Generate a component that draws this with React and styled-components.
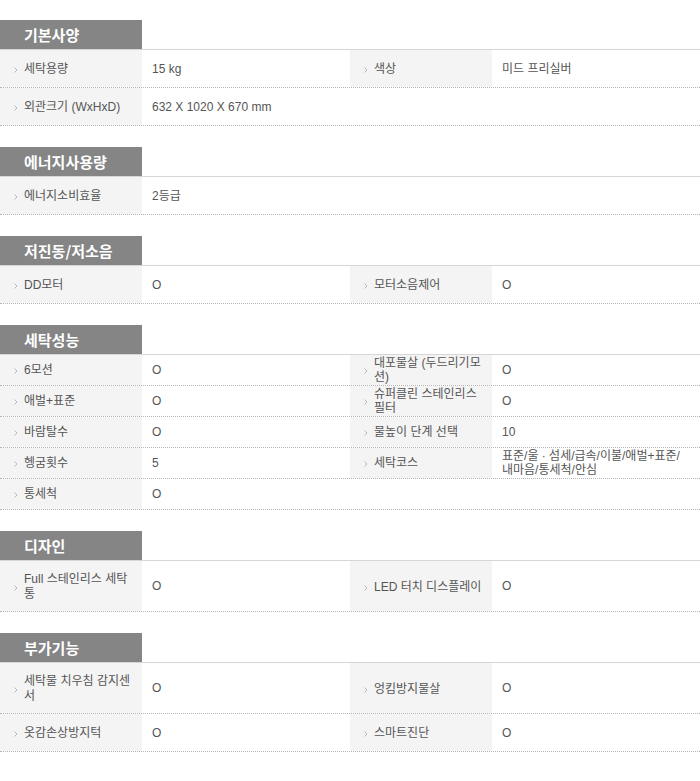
import React from 'react';
import styled, { createGlobalStyle } from 'styled-components';

const GlobalStyle = createGlobalStyle`
	html, body {
		margin: 0;
		padding: 0;
		background: #fff;
	}
	body {
		font-family: "Liberation Sans", "Noto Sans CJK KR", sans-serif;
		font-size: 12px;
		color: #555;
	}
`;

const Page = styled.div`
	width: 700px;
	padding-top: 20px;
	display: flex;
	flex-direction: column;
	gap: 21px;
`;

const Section = styled.section`
	display: flex;
	flex-direction: column;
`;

const Title = styled.h3`
	margin: 0;
	width: 142px;
	height: 29px;
	box-sizing: border-box;
	padding-left: 24px;
	background: #858585;
	color: #fff;
	font-family: "Noto Sans CJK KR", sans-serif;
	font-size: 15px;
	font-weight: 700;
	line-height: 29px;
`;

const Table = styled.div`
	border-top: 1px solid #d6d6d6;
`;

const Row = styled.div`
	display: grid;
	grid-template-columns: 142px 208px 142px 208px;
	border-bottom: 1px dotted #b5b5b5;
`;

const Label = styled.div`
	display: flex;
	align-items: center;
	gap: 6px;
	box-sizing: border-box;
	min-height: ${(p) => (p.$compact ? '30px' : '37px')};
	padding: ${(p) => (p.$compact ? '1px 4px 1px 14px' : '11px 4px 9px 14px')};
	background: ${(p) => (p.$empty ? 'transparent' : '#f4f4f4')};
	line-height: ${(p) => (p.$compact ? '14px' : '15px')};
	color: #555;
`;

const Value = styled.div`
	display: flex;
	align-items: center;
	box-sizing: border-box;
	padding: 0 14px 0 10px;
	line-height: 14px;
	color: #555;
`;

const Arrow = styled.svg`
	flex: none;
	width: 4px;
	height: 6px;
	margin-top: 1px;
`;

const Text = styled.span`
	flex: 1;
`;

function Bullet() {
	return (
		<Arrow viewBox="0 0 4 6">
			<polyline points="0.5,0.5 3,3 0.5,5.5" fill="none" stroke="#b8b8b8" strokeWidth="1" />
		</Arrow>
	);
}

function Pair({ item, compact }) {
	if (!item) {
		return (
			<>
				<Label $empty $compact={compact} />
				<Value />
			</>
		);
	}
	return (
		<>
			<Label $compact={compact}>
				<Bullet />
				<Text>{item[0]}</Text>
			</Label>
			<Value>{item[1]}</Value>
		</>
	);
}

const specs = [
	{
		title: '기본사양',
		rows: [
			[['세탁용량', '15 kg'], ['색상', '미드 프리실버']],
			[['외관크기 (WxHxD)', '632 X 1020 X 670 mm']],
		],
	},
	{
		title: '에너지사용량',
		rows: [[['에너지소비효율', '2등급']]],
	},
	{
		title: '저진동/저소음',
		rows: [[['DD모터', 'O'], ['모터소음제어', 'O']]],
	},
	{
		title: '세탁성능',
		compact: true,
		rows: [
			[['6모션', 'O'], ['대포물살 (두드리기모션)', 'O']],
			[['애벌+표준', 'O'], ['슈퍼클린 스테인리스 필터', 'O']],
			[['바람탈수', 'O'], ['물높이 단계 선택', '10']],
			[['헹굼횟수', '5'], ['세탁코스', '표준/울 · 섬세/급속/이불/애벌+표준/내마음/통세척/안심']],
			[['통세척', 'O']],
		],
	},
	{
		title: '디자인',
		rows: [[['Full 스테인리스 세탁통', 'O'], ['LED 터치 디스플레이', 'O']]],
	},
	{
		title: '부가기능',
		rows: [
			[['세탁물 치우침 감지센서', 'O'], ['엉킴방지물살', 'O']],
			[['옷감손상방지턱', 'O'], ['스마트진단', 'O']],
		],
	},
];

export default function App() {
	return (
		<>
			<GlobalStyle />
			<Page>
				{specs.map((sec) => (
					<Section key={sec.title}>
						<Title>{sec.title}</Title>
						<Table>
							{sec.rows.map((row, i) => (
								<Row key={i}>
									<Pair item={row[0]} compact={sec.compact} />
									<Pair item={row[1]} compact={sec.compact} />
								</Row>
							))}
						</Table>
					</Section>
				))}
			</Page>
		</>
	);
}
